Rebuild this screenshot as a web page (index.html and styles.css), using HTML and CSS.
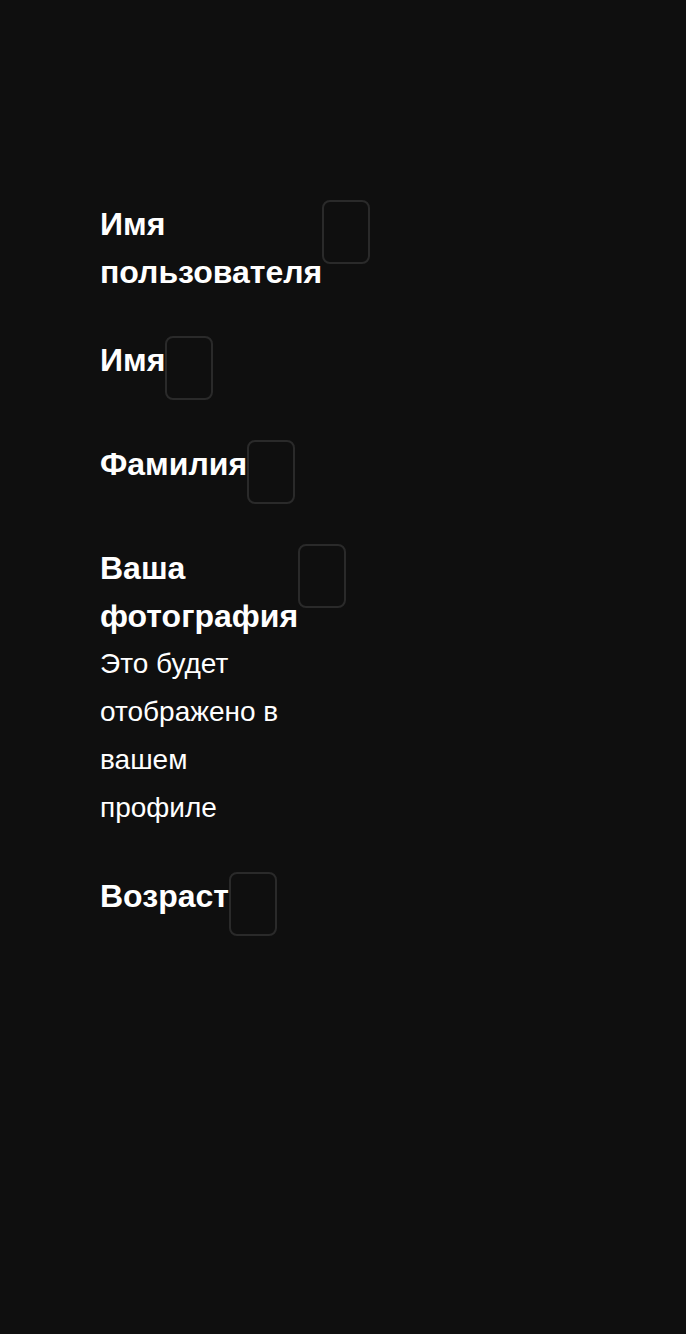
FILE: index.html
```html
<!DOCTYPE html>
<html lang="ru">
<head>
<meta charset="utf-8">
<link rel="stylesheet" href="styles.css">
</head>
<body>
<form class="form">
  <div class="row">
    <div class="label-col"><label class="label">Имя пользователя</label></div>
    <div class="field"></div>
  </div>
  <div class="row">
    <div class="label-col"><label class="label">Имя</label></div>
    <div class="field"></div>
  </div>
  <div class="row">
    <div class="label-col"><label class="label">Фамилия</label></div>
    <div class="field"></div>
  </div>
  <div class="row">
    <div class="label-col">
      <label class="label">Ваша фотография</label>
      <p class="hint">Это будет отображено в вашем профиле</p>
    </div>
    <div class="field"></div>
  </div>
  <div class="row">
    <div class="label-col"><label class="label">Возраст</label></div>
    <div class="field"></div>
  </div>
</form>
</body>
</html>
```
FILE: styles.css
```css
html, body {
  margin: 0;
  background: #0f0f0f;
  min-height: 100%;
}
body {
  font-family: "Liberation Sans", Arial, sans-serif;
  color: #ffffff;
}
.form {
  display: flex;
  flex-direction: column;
  gap: 40px;
  padding: 200px 0 0 100px;
  width: 0;
}
.row {
  display: flex;
  align-items: flex-start;
}
.label-col {
  width: min-content;
}
.label {
  display: block;
  font-size: 32px;
  font-weight: bold;
  line-height: 48px;
}
.hint {
  margin: 0;
  font-size: 28px;
  line-height: 48px;
}
.field {
  flex: none;
  width: 48px;
  height: 64px;
  box-sizing: border-box;
  border: 2px solid #2a2a2a;
  border-radius: 8px;
}
```
